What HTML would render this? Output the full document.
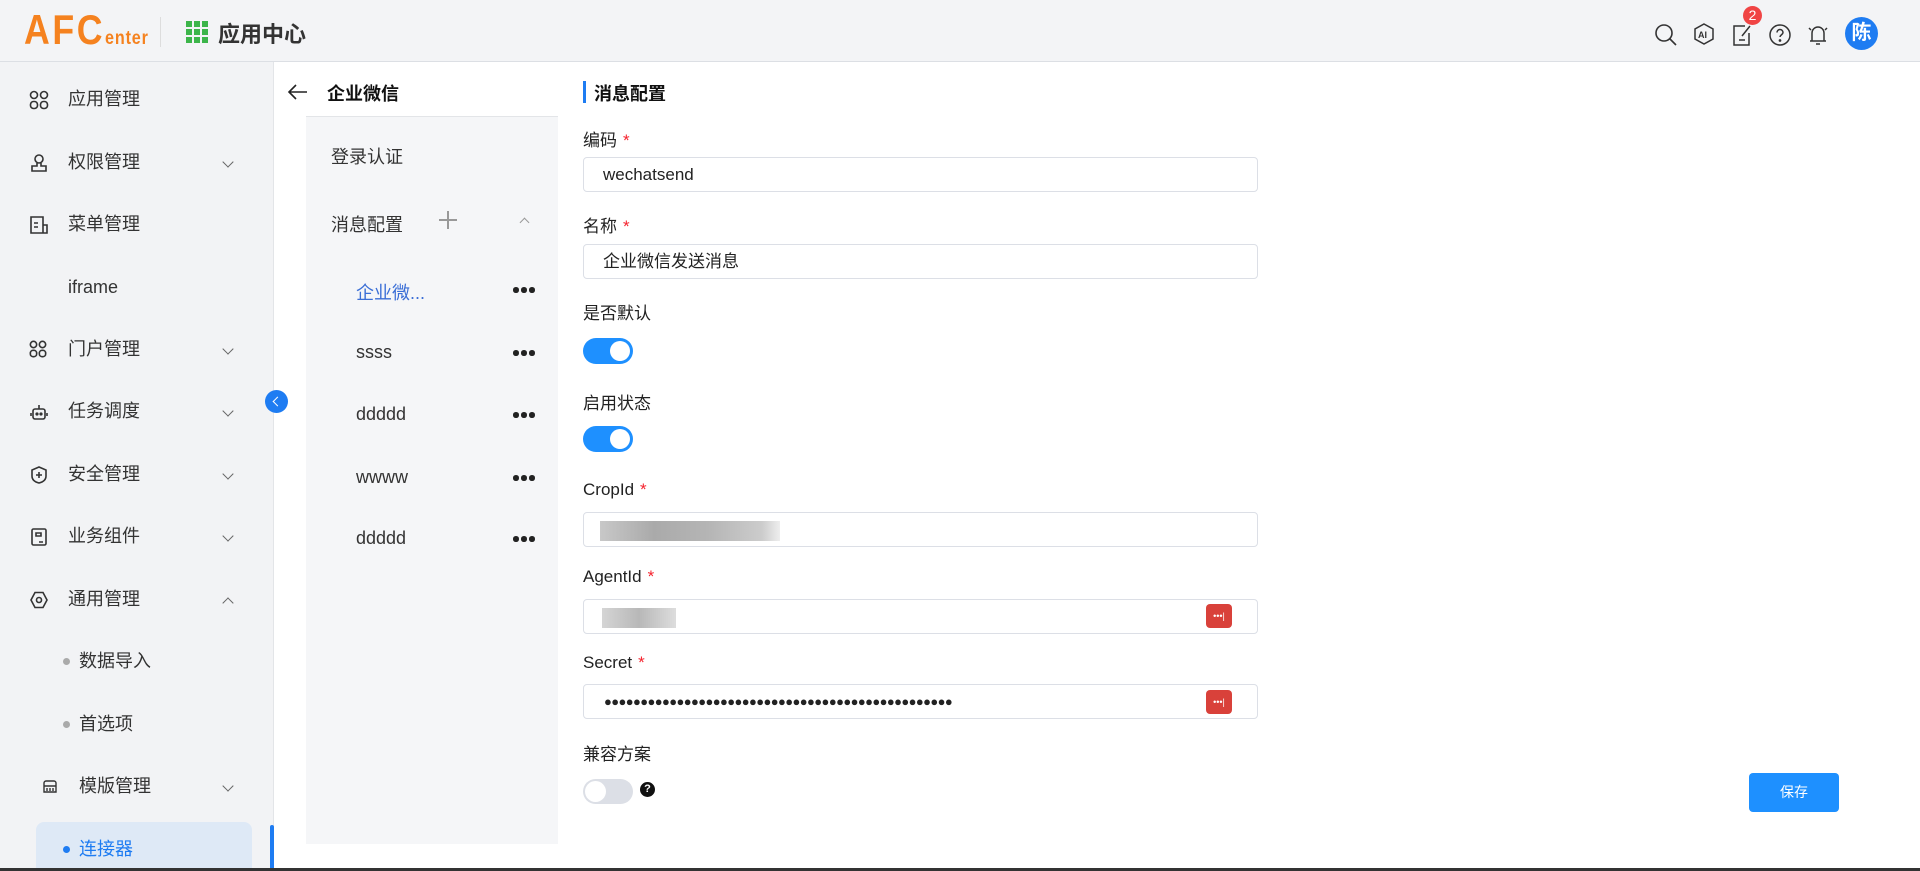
<!DOCTYPE html>
<html><head><meta charset="utf-8"><style>
*{box-sizing:border-box;margin:0;padding:0}
body{width:1920px;height:871px;overflow:hidden;background:#fff;font-family:"Liberation Sans","Noto Sans CJK SC",sans-serif;color:#222;position:relative}
.abs{position:absolute}
.hdr{left:0;top:0;width:1920px;height:62px;background:#f3f4f6;border-bottom:1px solid #dcdfe4}
.side{left:0;top:62px;width:274px;height:809px;background:#f2f3f5;border-right:1px solid #e3e5e8}
.mi{position:absolute;left:0;width:274px;height:40px;line-height:40px;font-size:18px;color:#333}
.mi .t{position:absolute;left:68px}
.mi svg.ic{position:absolute;left:29px;top:11px}
.chev{position:absolute;left:224px;top:16px;width:8px;height:8px;border-right:1.3px solid #666;border-bottom:1.3px solid #666;transform:rotate(45deg)}
.chev.up{transform:rotate(225deg);top:20px}
.dot{position:absolute;left:63px;top:17px;width:7px;height:7px;border-radius:50%;background:#aaa}
.lbl{position:absolute;left:583px;font-size:17px;color:#222}
.lbl i{color:#f5222d;font-style:normal;margin-left:6px}
.inp{position:absolute;left:583px;width:675px;height:35px;border:1px solid #dcdfe6;border-radius:4px;font-size:17px;line-height:33px;padding-left:19px;color:#222}
.tg{position:absolute;left:583px;width:50px;height:26px;border-radius:13px;background:#1e90ff}
.tg:after{content:"";position:absolute;right:3px;top:3px;width:20px;height:20px;border-radius:50%;background:#fff}
.kp{position:absolute;left:1206px;width:26px;height:24px;border-radius:4px;background:#d9413a;color:#fff;font-size:9px;line-height:24px;text-align:center;letter-spacing:0}
.sub{position:absolute;left:356px;font-size:18px;color:#333}
.dots{position:absolute;left:513px;width:22px;height:6px}
.dots:before,.dots:after,.dots i{content:"";position:absolute;top:0;width:5.5px;height:5.5px;border-radius:50%;background:#222}
.dots:before{left:0}.dots i{left:8px}.dots:after{left:16px}
.blur{position:absolute;background:#bbb}
</style></head><body>
<div class="abs hdr">
  <div class="abs" style="left:24px;top:6px;font-size:42px;font-weight:bold;color:#f5821f;letter-spacing:3px;transform:scaleX(0.85);transform-origin:left;font-family:'Liberation Sans',sans-serif">AFC<span style="font-size:19px;letter-spacing:1px">enter</span></div>
  <div class="abs" style="left:160px;top:17px;width:1px;height:30px;background:#ddd"></div>
  <svg class="abs" style="left:186px;top:21px" width="22" height="22" viewBox="0 0 22 22" fill="#3cb54a"><rect x="0" y="0" width="6" height="6"/><rect x="8" y="0" width="6" height="6"/><rect x="16" y="0" width="6" height="6"/><rect x="0" y="8" width="6" height="6"/><rect x="8" y="8" width="6" height="6"/><rect x="16" y="8" width="6" height="6"/><rect x="0" y="16" width="6" height="6"/><rect x="8" y="16" width="6" height="6"/><rect x="16" y="16" width="6" height="6"/></svg>
  <div class="abs" style="left:218px;top:17px;font-size:22px;font-weight:bold;color:#333">应用中心</div>
  <svg class="abs" style="left:1654px;top:23px" width="24" height="24" viewBox="0 0 24 24" fill="none" stroke="#333" stroke-width="1.6"><circle cx="10" cy="10" r="8"/><path d="M16 16l6 6"/></svg>
  <svg class="abs" style="left:1692px;top:22px" width="24" height="24" viewBox="0 0 24 24" fill="none" stroke="#333" stroke-width="1.5"><path d="M12 2l9 5v10l-9 5-9-5V7z"/><text x="6" y="16" font-size="9" font-weight="bold" fill="#333" stroke="none" font-family="Liberation Sans">AI</text></svg>
  <svg class="abs" style="left:1731px;top:23px" width="22" height="24" viewBox="0 0 22 24" fill="none" stroke="#333" stroke-width="1.5"><path d="M14 3H3v19h15V10"/><path d="M8 17h6M11 13l8-10"/></svg>
  <div class="abs" style="left:1743px;top:6px;width:19px;height:19px;border-radius:50%;background:#f04444;color:#fff;font-size:14px;text-align:center;line-height:19px">2</div>
  <svg class="abs" style="left:1768px;top:23px" width="24" height="24" viewBox="0 0 24 24" fill="none" stroke="#333" stroke-width="1.5"><circle cx="12" cy="12" r="10"/><path d="M9 9.5a3 3 0 116 0c0 2-3 2.5-3 4.5"/><circle cx="12" cy="17.5" r=".6" fill="#333"/></svg>
  <svg class="abs" style="left:1806px;top:22px" width="24" height="26" viewBox="0 0 24 26" fill="none" stroke="#333" stroke-width="1.5"><path d="M6 19V11a6 6 0 0112 0v8M4 19h16M10 22h4M3 6l2 2M21 6l-2 2"/></svg>
  <div class="abs" style="left:1845px;top:17px;width:33px;height:33px;border-radius:50%;background:#1e7cf2;color:#fff;font-size:20px;font-weight:bold;text-align:center;line-height:33px">陈</div>
</div>

<div class="abs side">
  <div class="mi" style="top:17px"><svg class="ic" width="20" height="20" viewBox="0 0 20 20" fill="none" stroke="#333" stroke-width="1.6"><circle cx="5" cy="5" r="3.5"/><circle cx="15" cy="5" r="3.5"/><rect x="1.5" y="11.5" width="7" height="7" rx="3"/><rect x="11.5" y="11.5" width="7" height="7" rx="3"/></svg><span class="t">应用管理</span></div>
  <div class="mi" style="top:80px"><svg class="ic" width="20" height="20" viewBox="0 0 20 20" fill="none" stroke="#333" stroke-width="1.6"><circle cx="10" cy="6" r="4"/><path d="M8 10v3H3v5h14v-5h-5v-3"/></svg><span class="t">权限管理</span><i class="chev"></i></div>
  <div class="mi" style="top:142px"><svg class="ic" width="20" height="20" viewBox="0 0 20 20" fill="none" stroke="#333" stroke-width="1.6"><path d="M2 2h12v16H2zM14 10h4v8h-4M5 8h4M5 12h4"/></svg><span class="t">菜单管理</span></div>
  <div class="mi" style="top:205px"><span class="t">iframe</span></div>
  <div class="mi" style="top:267px"><svg class="ic" width="18" height="18" viewBox="0 0 20 20" fill="none" stroke="#333" stroke-width="1.8"><circle cx="5" cy="5" r="3.5"/><circle cx="15" cy="5" r="3.5"/><rect x="1.5" y="11.5" width="7" height="7" rx="3"/><rect x="11.5" y="11.5" width="7" height="7" rx="3"/></svg><span class="t">门户管理</span><i class="chev"></i></div>
  <div class="mi" style="top:329px"><svg class="ic" width="20" height="20" viewBox="0 0 20 20" fill="none" stroke="#333" stroke-width="1.6"><rect x="4" y="7" width="12" height="10" rx="2"/><path d="M10 3v4M2 11v3M18 11v3"/><circle cx="8" cy="12" r=".8" fill="#333"/><circle cx="12" cy="12" r=".8" fill="#333"/></svg><span class="t">任务调度</span><i class="chev"></i></div>
  <div class="mi" style="top:392px"><svg class="ic" width="20" height="20" viewBox="0 0 20 20" fill="none" stroke="#333" stroke-width="1.6"><path d="M10 2l7 3v6c0 4-3 6-7 7-4-1-7-3-7-7V5z"/><path d="M10 7v6M7 10h6"/></svg><span class="t">安全管理</span><i class="chev"></i></div>
  <div class="mi" style="top:454px"><svg class="ic" width="20" height="20" viewBox="0 0 20 20" fill="none" stroke="#333" stroke-width="1.6"><rect x="3" y="2" width="14" height="16" rx="1.5"/><path d="M7 6h5v3H7zM10 15h4"/></svg><span class="t">业务组件</span><i class="chev"></i></div>
  <div class="mi" style="top:517px"><svg class="ic" width="20" height="20" viewBox="0 0 20 20" fill="none" stroke="#333" stroke-width="1.6"><path d="M6 2.5h8l4 7.5-4 7.5H6L2 10z"/><circle cx="10" cy="10" r="2.5"/></svg><span class="t">通用管理</span><i class="chev up"></i></div>
  <div class="mi" style="top:579px"><i class="dot"></i><span class="t" style="left:79px">数据导入</span></div>
  <div class="mi" style="top:642px"><i class="dot"></i><span class="t" style="left:79px">首选项</span></div>
  <div class="mi" style="top:704px"><svg class="ic" style="left:42px;top:12px" width="16" height="16" viewBox="0 0 16 16" fill="none" stroke="#333" stroke-width="1.4"><path d="M2 5a2 2 0 012-2h8a2 2 0 012 2v9H2zM2 8h12M5 10v3M8 10v3M11 10v3"/></svg><span class="t" style="left:79px">模版管理</span><i class="chev"></i></div>
  <div class="abs" style="left:36px;top:760px;width:216px;height:49px;background:#dee9f6;border-radius:8px 8px 0 0"></div>
  <div class="mi" style="top:767px;color:#1e7cf2"><i class="dot" style="background:#1e7cf2"></i><span class="t" style="left:79px">连接器</span></div>
  <div class="abs" style="left:270px;top:763px;width:4px;height:46px;background:#1e7cf2;border-radius:2px"></div>
</div>
<div class="abs" style="left:265px;top:390px;width:23px;height:23px;border-radius:50%;background:#1e7cf2"><div class="abs" style="left:9px;top:8px;width:7px;height:7px;border-left:1.6px solid #fff;border-bottom:1.6px solid #fff;transform:rotate(45deg)"></div></div>

<svg class="abs" style="left:287px;top:82px" width="22" height="20" viewBox="0 0 22 20" fill="none" stroke="#222" stroke-width="1.6"><path d="M20 10H2M9 3l-7 7 7 7"/></svg>
<div class="abs" style="left:327px;top:80px;font-size:18px;font-weight:bold;color:#111">企业微信</div>
<div class="abs" style="left:306px;top:116px;width:252px;height:728px;background:#f5f6f8;border-top:1px solid #e3e5e8"></div>
<div class="sub" style="left:331px;top:143px">登录认证</div>
<div class="sub" style="left:331px;top:211px">消息配置</div>
<div class="abs" style="left:439px;top:211px;width:18px;height:18px"><div class="abs" style="left:8px;top:0;width:1.5px;height:18px;background:#999"></div><div class="abs" style="left:0;top:8px;width:18px;height:1.5px;background:#999"></div></div>
<div class="abs" style="left:521px;top:219px;width:7px;height:7px;border-left:1.2px solid #999;border-top:1.2px solid #999;transform:rotate(45deg)"></div>
<div class="sub" style="top:279px;color:#3b6fd6">企业微...</div>
<div class="sub" style="top:342px">ssss</div>
<div class="sub" style="top:404px">ddddd</div>
<div class="sub" style="top:467px">wwww</div>
<div class="sub" style="top:528px">ddddd</div>
<div class="dots" style="top:287px"><i></i></div>
<div class="dots" style="top:350px"><i></i></div>
<div class="dots" style="top:412px"><i></i></div>
<div class="dots" style="top:475px"><i></i></div>
<div class="dots" style="top:536px"><i></i></div>

<div class="abs" style="left:583px;top:81px;width:3px;height:22px;background:#1e7cf2"></div>
<div class="abs" style="left:594px;top:80px;font-size:18px;font-weight:bold;color:#111">消息配置</div>

<div class="lbl" style="top:126px">编码<i>*</i></div>
<div class="inp" style="top:157px">wechatsend</div>
<div class="lbl" style="top:212px">名称<i>*</i></div>
<div class="inp" style="top:244px">企业微信发送消息</div>
<div class="lbl" style="top:299px">是否默认</div>
<div class="tg" style="top:338px"></div>
<div class="lbl" style="top:389px">启用状态</div>
<div class="tg" style="top:426px"></div>
<div class="lbl" style="top:480px">CropId<i>*</i></div>
<div class="inp" style="top:512px"></div>
<div class="blur" style="left:600px;top:521px;width:180px;height:20px;background:linear-gradient(90deg,#c8c8c8,#aaa 30%,#b5b5b5 60%,#ccc 90%,#eee)"></div>
<div class="lbl" style="top:567px">AgentId<i>*</i></div>
<div class="inp" style="top:599px"></div>
<div class="blur" style="left:602px;top:608px;width:74px;height:20px;background:linear-gradient(90deg,#d5d5d5,#b8b8b8 50%,#ddd)"></div>
<div class="kp" style="top:604px">•••|</div>
<div class="lbl" style="top:653px">Secret<i>*</i></div>
<div class="inp" style="top:684px;font-size:13px;letter-spacing:-0.6px;padding-left:20px">●●●●●●●●●●●●●●●●●●●●●●●●●●●●●●●●●●●●●●●●●●●●●●●●</div>
<div class="kp" style="top:690px">•••|</div>
<div class="lbl" style="top:740px">兼容方案</div>
<div class="abs" style="left:583px;top:779px;width:50px;height:25px;border-radius:13px;background:#dcdfe6"><div class="abs" style="left:2px;top:2px;width:21px;height:21px;border-radius:50%;background:#fff"></div></div>
<div class="abs" style="left:640px;top:782px;width:15px;height:15px;border-radius:50%;background:#111;color:#fff;font-size:11px;font-weight:bold;text-align:center;line-height:15px">?</div>
<div class="abs" style="left:1749px;top:773px;width:90px;height:39px;border-radius:4px;background:#1e90ff;color:#fff;font-size:14px;text-align:center;line-height:39px">保存</div>
<div class="abs" style="left:0;top:868px;width:1920px;height:3px;background:#333"></div>
</body></html>
